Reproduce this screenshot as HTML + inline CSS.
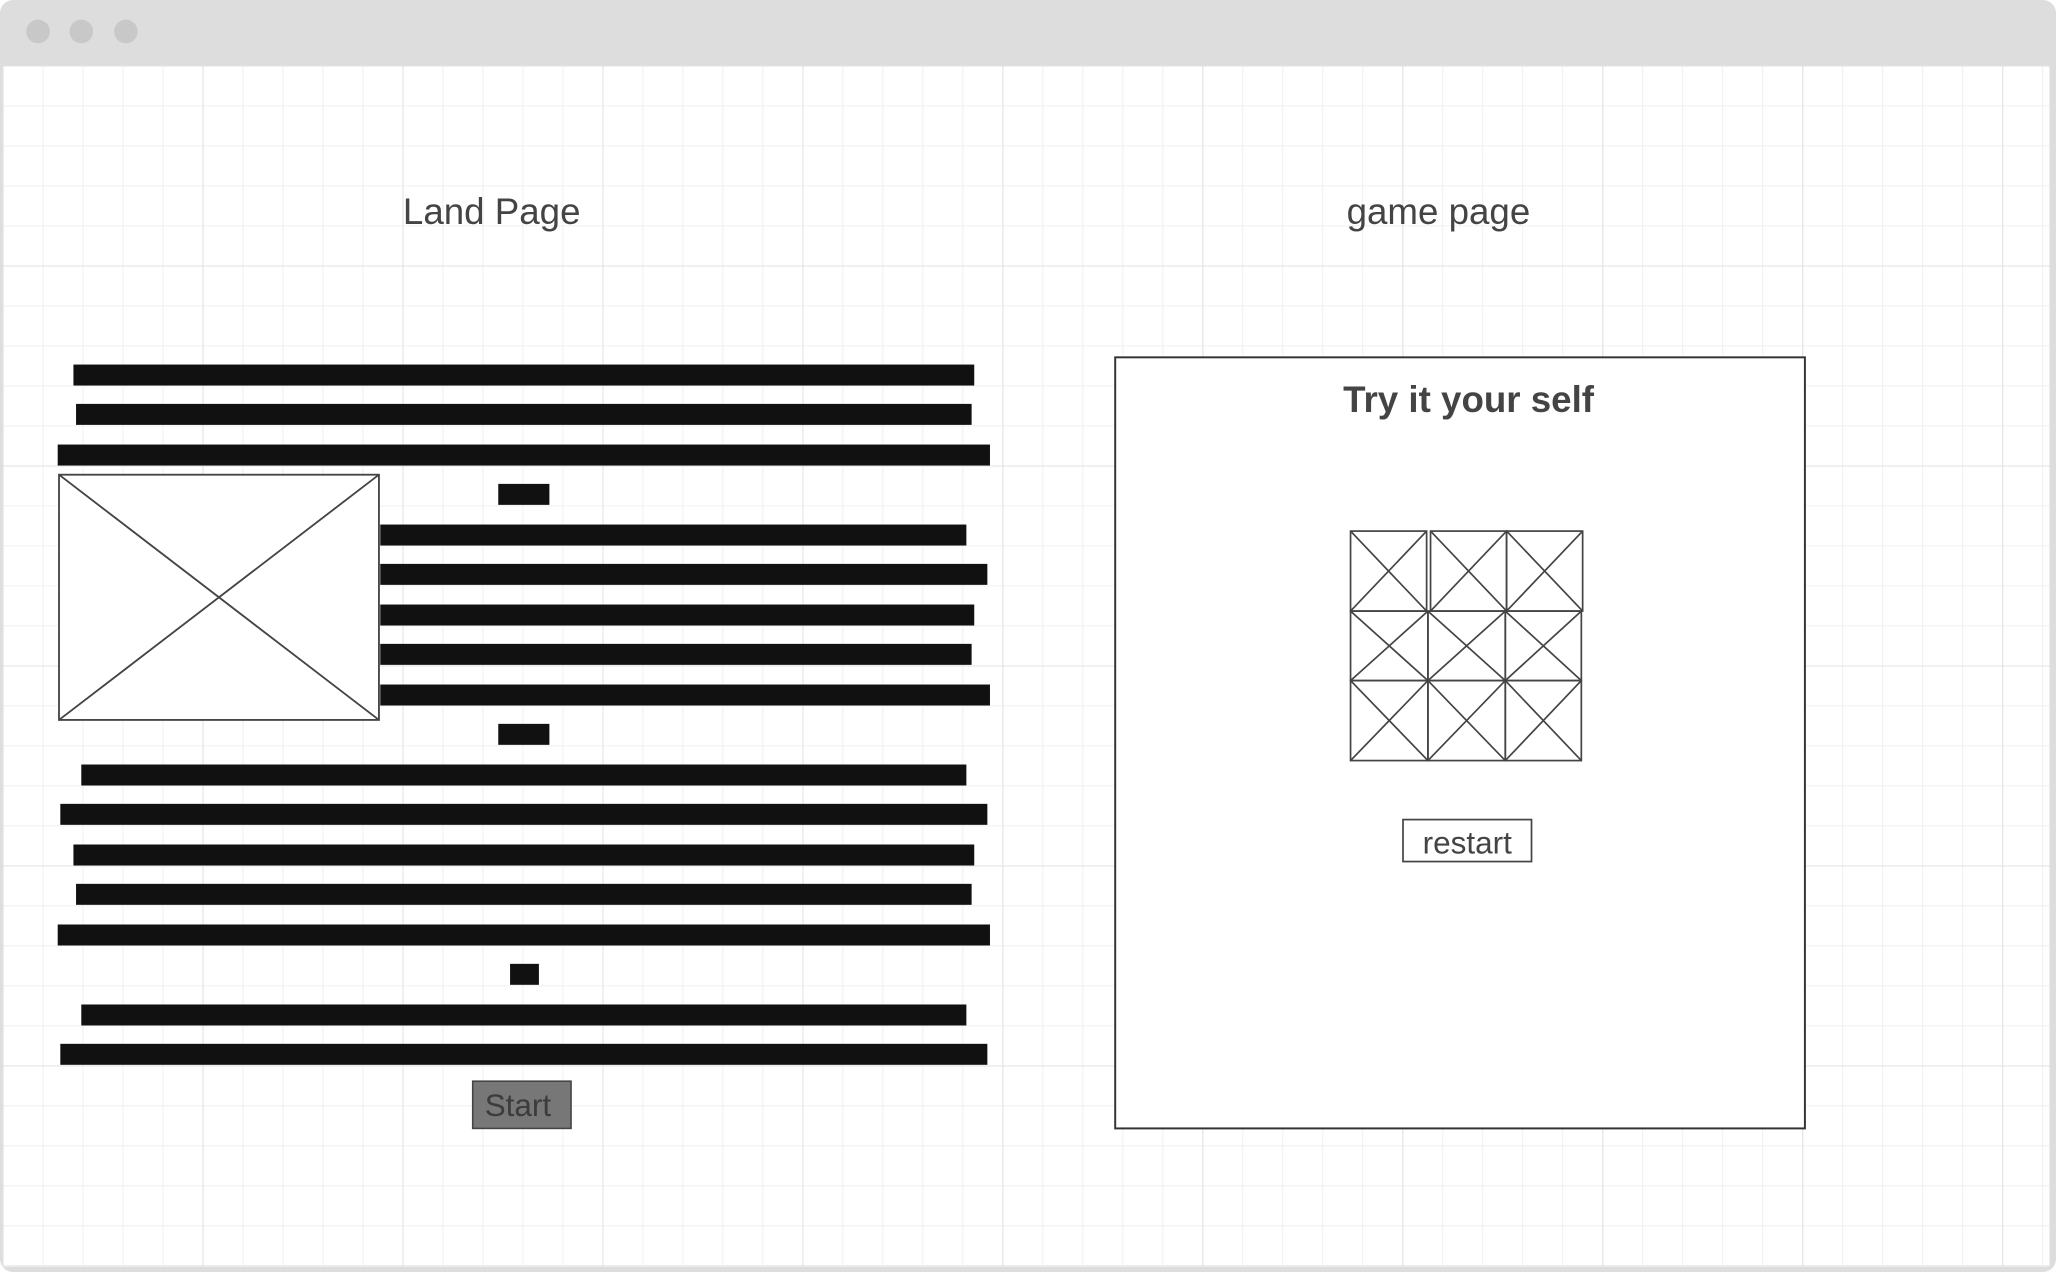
<!DOCTYPE html>
<html><head><meta charset="utf-8"><style>
html,body{margin:0;padding:0;background:#fff;overflow:hidden}
svg{display:block}
text{font-family:"Liberation Sans",sans-serif}
</style></head><body>
<svg width="2056" height="1272" viewBox="0 0 1568 970" preserveAspectRatio="none" xmlns="http://www.w3.org/2000/svg">
<defs>
<pattern id="minor" x="2" y="50" width="30.5" height="30.5" patternUnits="userSpaceOnUse">
<path d="M0 0V30.5M0 0H30.5" stroke="#ebebeb" stroke-width="1.2" fill="none"/>
</pattern>
<pattern id="major" x="2" y="50" width="152.5" height="152.5" patternUnits="userSpaceOnUse">
<path d="M0 0V152.5M0 0H152.5" stroke="#e0e0e0" stroke-width="1.4" fill="none"/>
</pattern>
</defs>
<rect x="0" y="0" width="1568" height="970" rx="10" fill="#dddddd"/>
<rect x="2" y="50" width="1561" height="916" fill="#fff"/>
<rect x="2" y="50" width="1561" height="916" fill="url(#minor)"/>
<rect x="2" y="50" width="1561" height="916" fill="url(#major)"/>
<circle cx="29" cy="24" r="9" fill="#c8c8c8"/>
<circle cx="62" cy="24" r="9" fill="#c8c8c8"/>
<circle cx="96" cy="24" r="9" fill="#c8c8c8"/>

<text x="375" y="171" font-size="28" fill="#444" text-anchor="middle">Land Page</text>
<text x="1097" y="171" font-size="28" fill="#444" text-anchor="middle">game page</text>

<g fill="#111">
<rect x="56" y="278" width="687" height="16"/>
<rect x="58" y="308" width="683" height="16"/>
<rect x="44" y="339" width="711" height="16"/>
<rect x="380" y="369" width="39" height="16"/>
<rect x="290" y="400" width="447" height="16"/>
<rect x="290" y="430" width="463" height="16"/>
<rect x="290" y="461" width="453" height="16"/>
<rect x="290" y="491" width="451" height="16"/>
<rect x="290" y="522" width="465" height="16"/>
<rect x="380" y="552" width="39" height="16"/>
<rect x="62" y="583" width="675" height="16"/>
<rect x="46" y="613" width="707" height="16"/>
<rect x="56" y="644" width="687" height="16"/>
<rect x="58" y="674" width="683" height="16"/>
<rect x="44" y="705" width="711" height="16"/>
<rect x="389" y="735" width="22" height="16"/>
<rect x="62" y="766" width="675" height="16"/>
<rect x="46" y="796" width="707" height="16"/>
</g>
<g stroke="#444" stroke-width="1.4" fill="#fff">
<rect x="45" y="362" width="244" height="187"/>
<path d="M45 362L289 549M289 362L45 549" fill="none"/>
</g>
<rect x="360.5" y="824.5" width="75" height="36" fill="#777" stroke="#444" stroke-width="1.2"/>
<text x="395" y="851" font-size="24" fill="#3c3c3c" text-anchor="middle">Start</text>

<rect x="850.5" y="272.5" width="526" height="588" fill="#fff" stroke="#333" stroke-width="1.5"/>
<text x="1120" y="314" font-size="28" font-weight="bold" fill="#444" text-anchor="middle">Try it your self</text>

<g stroke="#444" stroke-width="1.3" fill="none">
<rect x="1030" y="405" width="58" height="61"/><path d="M1030 405L1088 466M1088 405L1030 466"/>
<rect x="1091" y="405" width="58" height="61"/><path d="M1091 405L1149 466M1149 405L1091 466"/>
<rect x="1149" y="405" width="58" height="61"/><path d="M1149 405L1207 466M1207 405L1149 466"/>
<rect x="1030" y="466" width="59" height="53"/><path d="M1030 466L1089 519M1089 466L1030 519"/>
<rect x="1089" y="466" width="59" height="53"/><path d="M1089 466L1148 519M1148 466L1089 519"/>
<rect x="1148" y="466" width="58" height="53"/><path d="M1148 466L1206 519M1206 466L1148 519"/>
<rect x="1030" y="519" width="59" height="61"/><path d="M1030 519L1089 580M1089 519L1030 580"/>
<rect x="1089" y="519" width="59" height="61"/><path d="M1089 519L1148 580M1148 519L1089 580"/>
<rect x="1148" y="519" width="58" height="61"/><path d="M1148 519L1206 580M1206 519L1148 580"/>
</g>
<rect x="1070" y="625" width="98" height="32" fill="#fff" stroke="#444" stroke-width="1.3"/>
<text x="1119" y="651" font-size="24" fill="#444" text-anchor="middle">restart</text>
</svg>
</body></html>
